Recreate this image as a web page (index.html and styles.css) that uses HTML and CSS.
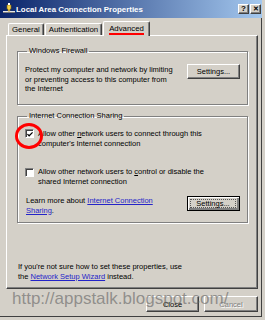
FILE: index.html
```html
<!DOCTYPE html>
<html lang="en">
<head>
  <meta charset="UTF-8" />
  <title>Local Area Connection Properties</title>
  <link rel="stylesheet" href="styles.css">
</head>
<body>
  <div class="window">
    <div class="titlebar">
      <svg class="title-icon" width="12" height="12" viewBox="0 0 12 12">
        <rect x="0" y="8" width="12" height="2" fill="#7a7a7a"/>
        <rect x="0" y="8" width="12" height="1" fill="#e8e8e8"/>
        <path d="M4 2 h4 v4 h-1 v2 h-2 v-2 h-1 z" fill="#f2d24a" stroke="#8a6a10" stroke-width="0.6"/>
        <rect x="5" y="0" width="2" height="2" fill="#fff"/>
      </svg>
      <span class="title">Local Area Connection Properties</span>
      <div class="caption-btns">
        <span class="cap-btn">?</span>
        <span class="cap-btn close-x">&#x2715;</span>
      </div>
    </div>

    <div class="content">
      <div class="tabs">
        <div class="tab">General</div>
        <div class="tab">Authentication</div>
        <div class="tab active"><span class="marked">Advanced</span></div>
      </div>

      <div class="panel">
        <fieldset class="group firewall">
          <legend>Windows Firewall</legend>
          <div class="row">
            <p class="text">Protect my computer and network by limiting<br>or preventing access to this computer from<br>the Internet</p>
            <button class="btn">Settings...</button>
          </div>
        </fieldset>

        <fieldset class="group ics">
          <legend>Internet Connection Sharing</legend>
          <div class="check-row">
            <span class="checkbox checked">
              <svg width="7" height="7" viewBox="0 0 7 7"><path d="M0.5 3 L2.5 5 L6.5 1" fill="none" stroke="#000" stroke-width="1.4"/></svg>
              <span class="callout"></span>
            </span>
            <p class="text">Allow other <u>n</u>etwork users to connect through this<br>computer's Internet connection</p>
          </div>
          <div class="check-row second">
            <span class="checkbox"></span>
            <p class="text">Allow other network users to <u>c</u>ontrol or disable the<br>shared Internet connection</p>
          </div>
          <div class="row learn">
            <p class="text">Learn more about <a href="#">Internet Connection<br>Sharing</a>.</p>
            <button class="btn default"><span class="focus">Settings...</span></button>
          </div>
        </fieldset>

        <p class="text hint">If you're not sure how to set these properties, use<br>the <a href="#">Network Setup Wizard</a> instead.</p>
      </div>

      <div class="actions">
        <button class="btn">Close</button>
        <button class="btn" disabled>Cancel</button>
      </div>
    </div>

    <div class="watermark">http://appstalk.blogspot.com/</div>
  </div>
</body>
</html>
```

FILE: styles.css
```css
body {
  margin: 0;
  font-family: 'Liberation Sans', Arial, sans-serif;
  font-size: 7.5px;
  color: #000;
  background: #d4d0c8;
}

.window {
  position: relative;
  width: 265px;
  height: 320px;
  background: #d4d0c8;
  box-sizing: border-box;
  border-right: 3px solid #d4d0c8;
  border-bottom: 3px solid #d4d0c8;
  box-shadow: inset -1px -1px 0 #404040;
  overflow: hidden;
}

.titlebar {
  height: 18px;
  display: flex;
  align-items: center;
  padding: 0 2px 0 3px;
  margin-right: -3px;
  background: linear-gradient(to right, #0a246a, #a6caf0);
}

.title-icon {
  flex: none;
  margin-right: 1px;
}

.title {
  flex: 1;
  color: #fff;
  font-weight: bold;
  font-size: 7.9px;
}

.caption-btns {
  display: flex;
  gap: 1px;
  margin-right: 2px;
}

.cap-btn {
  width: 11px;
  height: 10px;
  box-sizing: border-box;
  background: #d4d0c8;
  border: 1px solid;
  border-color: #fff #404040 #404040 #fff;
  box-shadow: inset -1px -1px 0 #808080;
  font-size: 8px;
  font-weight: bold;
  line-height: 8px;
  text-align: center;
}

.cap-btn.close-x {
  font-size: 7px;
}

.content {
  padding: 3px 4px 0 6px;
}

.tabs {
  display: flex;
  align-items: flex-end;
  height: 14px;
  padding-left: 2px;
  position: relative;
  z-index: 1;
}

.tab {
  height: 12px;
  padding: 0 3px;
  margin-right: 1px;
  box-sizing: border-box;
  border: 1px solid;
  border-bottom: none;
  border-color: #fff #404040 #404040 #fff;
  box-shadow: inset -1px 0 0 #808080;
  border-radius: 2px 2px 0 0;
  line-height: 12px;
  font-size: 7.8px;
  color: #000;
}

.tab.active {
  height: 15px;
  margin: 0 0 -1px 0;
  padding: 0 5px;
  background: #d4d0c8;
  line-height: 13px;
}

.marked {
  border-bottom: 2px solid #f00;
}

.panel {
  height: 254px;
  box-sizing: border-box;
  border: 1px solid;
  border-color: #fff #404040 #404040 #fff;
  box-shadow: inset -1px -1px 0 #808080;
  padding: 10px 9px 0 10px;
}

.group {
  box-sizing: border-box;
  margin: 0;
  padding: 0 7px;
  border: 1px solid #808080;
  box-shadow: 1px 1px 0 #fff, inset 1px 1px 0 #fff;
}

.group legend {
  padding: 0 2px;
  margin-left: 2px;
  font-size: 7.5px;
  line-height: 10px;
}

.text {
  margin: 0;
  line-height: 9.5px;
}

.row {
  display: flex;
  justify-content: space-between;
  align-items: flex-start;
}

.firewall {
  height: 59px;
  padding-top: 9px;
}

.firewall .btn {
  margin-top: -1px;
}

.ics {
  margin-top: 6px;
  height: 112px;
  padding-top: 8px;
}

.check-row {
  display: flex;
  align-items: flex-start;
  gap: 4px;
}

.check-row.second {
  margin-top: 19px;
}

.checkbox {
  position: relative;
  flex: none;
  width: 9px;
  height: 9px;
  box-sizing: border-box;
  background: #fff;
  border: 1px solid;
  border-color: #808080 #fff #fff #808080;
  box-shadow: inset 1px 1px 0 #404040;
  display: flex;
  align-items: center;
  justify-content: center;
}

.check-row.second .checkbox {
  margin-top: 1px;
}

.checkbox svg {
  margin: 1px 0 0 1px;
}

.callout {
  position: absolute;
  left: -11px;
  top: -7px;
  width: 28px;
  height: 26px;
  box-sizing: border-box;
  border: 3px solid #f00;
  border-radius: 50%;
}

.learn {
  margin-top: 10px;
}

.learn .text {
  padding-left: 1px;
}

a {
  color: #2424c8;
  text-decoration: underline;
}

.btn {
  width: 53px;
  height: 15px;
  box-sizing: border-box;
  padding: 0;
  background: #d4d0c8;
  border: 1px solid;
  border-color: #fff #404040 #404040 #fff;
  box-shadow: inset -1px -1px 0 #808080;
  font-family: inherit;
  font-size: 7.5px;
  color: #000;
}

.btn.default {
  border: 1px solid #000;
  box-shadow: inset 1px 1px 0 #fff, inset -2px -2px 0 #808080;
}

.focus {
  display: block;
  margin: 0 3px 0 2px;
  height: 9px;
  line-height: 9px;
  box-sizing: border-box;
  border: 1px dotted #555;
  line-height: 7px;
}

.btn:disabled {
  color: #808080;
  text-shadow: 1px 1px 0 #fff;
}

.hint {
  margin-top: 39px;
  padding-left: 1px;
}

.actions {
  display: flex;
  justify-content: flex-end;
  gap: 5px;
  padding-top: 7px;
}

.actions .btn {
  height: 16px;
}

.actions .btn + .btn {
  width: 54px;
}

.watermark {
  position: absolute;
  left: 12px;
  top: 289px;
  font-family: 'Liberation Sans', Arial, sans-serif;
  font-size: 17px;
  line-height: 20px;
  color: rgba(100, 100, 100, 0.62);
  pointer-events: none;
}
```
